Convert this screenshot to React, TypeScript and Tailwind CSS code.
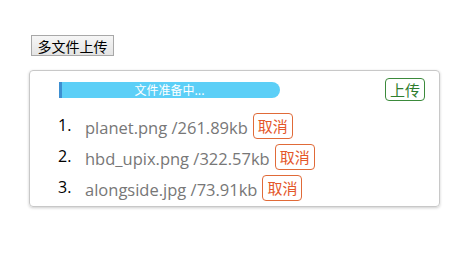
import React from "react";

const files = [
  { name: "planet.png", size: "261.89kb" },
  { name: "hbd_upix.png", size: "322.57kb" },
  { name: "alongside.jpg", size: "73.91kb" },
];

const cjk = "font-['Open_Sans','Noto_Sans_CJK_SC',sans-serif]";

export default function App() {
  return (
    <div className={`w-[470px] h-[273px] bg-white pt-[35px] pl-[29px] ${cjk}`}>
      <button className="ml-[2px] flex h-[21px] w-[83px] items-center justify-center border border-[#a8a8a8] bg-gradient-to-b from-[#f6f6f6] to-[#e4e4e4] text-[14px] leading-none text-black font-['Noto_Sans_CJK_SC',sans-serif]">
        多文件上传
      </button>
      <div className="mt-[14px] flex h-[137px] w-[411px] flex-col rounded-[4px] border border-[#c8c8c8] pt-[5px] shadow-[0_1px_3px_rgba(0,0,0,0.2)]">
        <div className="flex items-center justify-between pl-[29px] pr-[14px]">
          <div className="relative mt-[2px] flex h-[16px] w-[221px] items-center justify-center rounded-r-full bg-[#5ccff7]">
            <div className="absolute left-0 top-0 h-full w-[3px] bg-[#3d8fd1]" />
            <span className="text-[12px] leading-none text-white font-['Noto_Sans_CJK_SC',sans-serif]">文件准备中...</span>
          </div>
          <button className="mt-[2px] flex h-[23px] w-[40px] items-center justify-center rounded-[4px] border border-[#3b8a3b] text-[15px] leading-none text-[#2f7d2f] font-['Noto_Sans_CJK_SC',sans-serif]">
            上传
          </button>
        </div>
        <div className="mt-[9px] flex flex-col pl-[28px]">
          {files.map((f, i) => (
            <div key={f.name} className="flex h-[31px] items-center">
              <span className="mb-[2px] w-[27px] text-[16px] leading-none text-black font-['Open_Sans',sans-serif]">{i + 1}.</span>
              <span className="mt-[5px] text-[16.5px] leading-none text-[#777] font-['Open_Sans',sans-serif]">
                {f.name} /{f.size}
              </span>
              <button className="ml-[5px] flex h-[26px] w-[40px] items-center justify-center rounded-[4px] border border-[#e06a38] text-[15px] leading-none text-[#e4572a] font-['Noto_Sans_CJK_SC',sans-serif]">
                取消
              </button>
            </div>
          ))}
        </div>
      </div>
    </div>
  );
}
